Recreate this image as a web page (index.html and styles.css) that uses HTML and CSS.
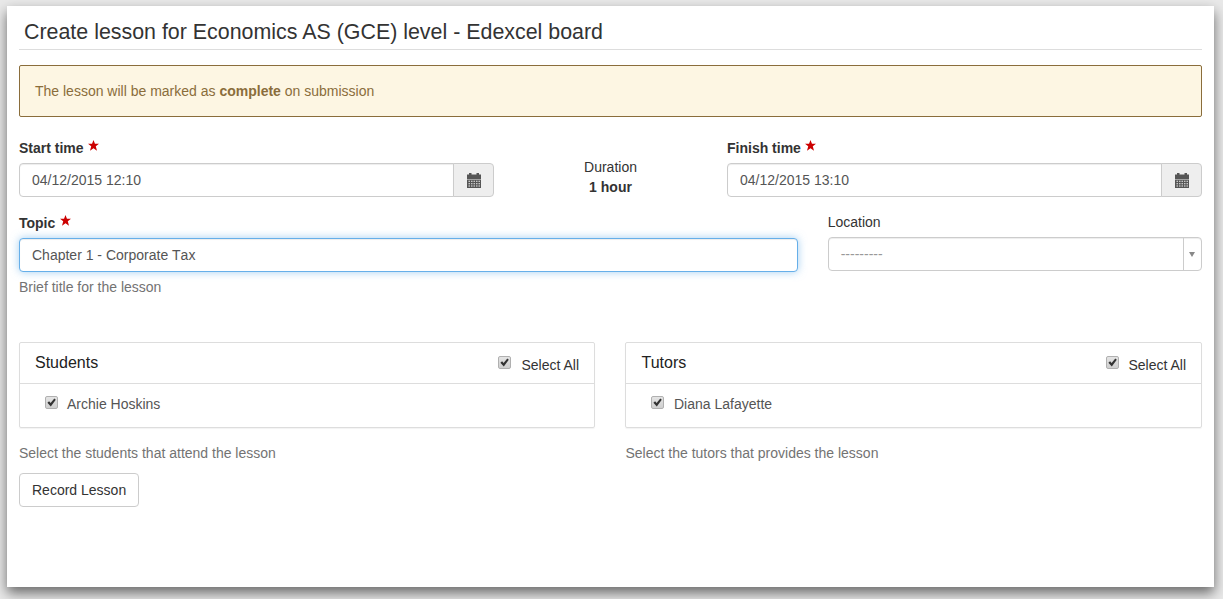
FILE: index.html
```html
<!DOCTYPE html>
<html lang="en">
<head>
<meta charset="utf-8">
<title>Create lesson</title>
<link rel="stylesheet" href="styles.css">
</head>
<body>
<svg class="defs" width="0" height="0" aria-hidden="true">
  <symbol id="star" viewBox="0 0 12 12"><polygon points="6,0 7.6,4.2 12,4.2 8.5,6.9 9.8,11.600 6,8.900 2.200,11.600 3.500,6.900 0,4.200 4.400,4.200"/></symbol>
  <symbol id="cal" viewBox="0 0 14 15"><path d="M0 1.500h2V0h2.500v1.500h5V0H12v1.500h2V6H0z"/><path fill-rule="evenodd" d="M0 6.500h14V15H0zM1.500 7.800v1h1.500v-1zm2.500 0v1h1.500v-1zm2.500 0v1H8v-1zm2.500 0v1h1.500v-1zm2.500 0v1H13v-1zM1.500 10.200v1h1.500v-1zm2.500 0v1h1.500v-1zm2.500 0v1H8v-1zm2.500 0v1h1.500v-1zm2.500 0v1H13v-1zM1.500 12.600v1h1.500v-1zm2.500 0v1h1.500v-1zm2.500 0v1H8v-1zm2.500 0v1h1.500v-1zm2.500 0v1H13v-1z"/></symbol>
  <symbol id="tick" viewBox="0 0 11 11"><path d="M1.400 5.800l1.700-1.500 1.500 1.700L8.300 1.400l1.500 1.300-5 6.800z"/></symbol>
</svg>
<main class="card">
  <h1 class="title">Create lesson for Economics AS (GCE) level - Edexcel board</h1>
  <div class="alert">The lesson will be marked as <strong>complete</strong> on submission</div>
  <form>
    <div class="row times">
      <div class="col col-5">
        <label class="label">Start time <svg class="star"><use href="#star"/></svg></label>
        <div class="input-group">
          <input class="control" type="text" value="04/12/2015 12:10">
          <span class="addon"><svg class="cal"><use href="#cal"/></svg></span>
        </div>
      </div>
      <div class="col col-2 duration">
        <div>Duration</div>
        <strong>1 hour</strong>
      </div>
      <div class="col col-5">
        <label class="label">Finish time <svg class="star"><use href="#star"/></svg></label>
        <div class="input-group">
          <input class="control" type="text" value="04/12/2015 13:10">
          <span class="addon"><svg class="cal"><use href="#cal"/></svg></span>
        </div>
      </div>
    </div>
    <div class="row topic-row">
      <div class="col col-8">
        <label class="label">Topic <svg class="star"><use href="#star"/></svg></label>
        <input class="control focus" type="text" value="Chapter 1 - Corporate Tax">
        <p class="help">Brief title for the lesson</p>
      </div>
      <div class="col col-4">
        <div class="label plain">Location</div>
        <div class="select">
          <span class="select-value">---------</span>
          <span class="select-arrow"></span>
        </div>
      </div>
    </div>
    <div class="row panels">
      <div class="col col-6">
        <section class="panel panel-left">
          <header class="panel-head">
            <span class="panel-title">Students</span>
            <span class="select-all"><span class="check"><svg><use href="#tick"/></svg></span>Select All</span>
          </header>
          <div class="panel-body"><span class="check"><svg><use href="#tick"/></svg></span>Archie Hoskins</div>
        </section>
        <p class="help">Select the students that attend the lesson</p>
      </div>
      <div class="col col-6">
        <section class="panel panel-right">
          <header class="panel-head">
            <span class="panel-title">Tutors</span>
            <span class="select-all"><span class="check"><svg><use href="#tick"/></svg></span>Select All</span>
          </header>
          <div class="panel-body"><span class="check"><svg><use href="#tick"/></svg></span>Diana Lafayette</div>
        </section>
        <p class="help">Select the tutors that provides the lesson</p>
      </div>
    </div>
    <button class="btn" type="button">Record Lesson</button>
  </form>
</main>
</body>
</html>
```
FILE: styles.css
```css
* { box-sizing: border-box; }
html, body { height: 100%; }
body {
  margin: 0;
  padding: 6px 9px 12px 7px;
  background: #e9e9e9;
  font: 14px/20px "Liberation Sans", Arial, sans-serif;
  color: #333;
  overflow: hidden;
}
.defs { position: absolute; }
.card {
  height: 581px;
  background: #fff;
  padding: 0 12px;
  box-shadow: 0 6px 12px rgba(0, 0, 0, .55);
}
.title {
  margin: 0 0 15px;
  height: 44px;
  padding: 14px 0 0 5px;
  font-size: 21.4px;
  line-height: 24px;
  font-weight: 400;
  color: #333;
  border-bottom: 1px solid #ddd;
}
.alert {
  height: 52px;
  padding: 15px;
  margin-bottom: 20px;
  border: 1px solid #8a6d3b;
  border-radius: 2px;
  background: #fdf6e3;
  color: #8a6d3b;
}
.row { display: flex; gap: 30px; }
.col { min-width: 0; }
.col-5 { flex: 0 0 475px; }
.col-2 { flex: 0 0 173px; }
.col-8 { flex: 0 0 778.67px; }
.col-4 { flex: 1 1 0; }
.col-6 { flex: 1 1 0; }
.times { height: 75px; }
.label { display: block; height: 26px; padding-top: 1px; font-weight: 700; }
.label.plain { font-weight: 400; height: 25px; padding-top: 0; }
.star { width: 11px; height: 11px; margin-left: .5px; vertical-align: 2px; fill: #c00; }
.input-group { display: flex; height: 34px; }
.control {
  display: block;
  width: 100%;
  height: 34px;
  padding: 6px 12px;
  border: 1px solid #ccc;
  border-radius: 4px;
  background: #fff;
  color: #555;
  font: inherit;
  font-kerning: none;
  box-shadow: inset 0 1px 1px rgba(0, 0, 0, .075);
  outline: none;
}
.input-group .control { flex: 1 1 auto; border-radius: 4px 0 0 4px; }
.focus {
  border-color: #66afe9;
  box-shadow: inset 0 1px 1px rgba(0, 0, 0, .075), 0 0 8px rgba(102, 175, 233, .6);
}
.addon {
  flex: 0 0 41px;
  display: flex;
  align-items: center;
  justify-content: center;
  margin-left: -1px;
  background: #eee;
  border: 1px solid #ccc;
  border-radius: 0 4px 4px 0;
}
.cal { width: 14px; height: 15px; fill: #555; }
.duration { padding-top: 20px; text-align: center; }
.topic-row { height: 130px; }
.help { margin: 5px 0 10px; color: #737373; }
.select {
  display: flex;
  height: 34px;
  border: 1px solid #ccc;
  border-radius: 4px;
  background: #fff;
  box-shadow: inset 0 1px 1px rgba(0, 0, 0, .075);
}
.select-value { flex: 1 1 auto; padding: 6px 12px; color: #999; }
.select-arrow { flex: 0 0 18px; position: relative; border-left: 1px solid #ccc; }
.select-arrow::after {
  content: "";
  position: absolute;
  left: 5px;
  top: 14px;
  border: 3.500px solid transparent;
  border-bottom: 0;
  border-top: 5px solid #888;
}
.panel {
  border: 1px solid #ddd;
  border-radius: 2px;
  height: 86px;
  margin-bottom: 15px;
  box-shadow: 0 1px 1px rgba(0, 0, 0, .05);
}
.panel-left { margin-right: .5px; }
.panel-right { margin-left: -.5px; }
.panel-right .panel-head { padding-left: 15.5px; }
.panel-right .panel-body { padding-left: 25px; }
.panel .check { margin-right: 10px; }
.panel-body .check { margin-right: 9px; }
.panel-right .select-all .check { margin-right: 9.5px; }
.panel-right .panel-body .check { margin-right: 10px; }
.panel-head {
  display: flex;
  justify-content: space-between;
  align-items: center;
  height: 41px;
  padding: 0 15px;
  border-bottom: 1px solid #ddd;
}
.panel-title { font-size: 16px; color: #222; }
.select-all { display: flex; align-items: center; padding-top: 4px; }
.select-all .check { margin-top: -6px; }
.panel-body { display: flex; align-items: center; height: 43px; padding: 0 0 3px 25px; color: #555; }
.panel-body .check { margin-top: -4px; }
.check {
  flex: none;
  display: inline-block;
  width: 13px;
  height: 13px;
  border: 1px solid #b0b0b0;
  border-radius: 2px;
  background: linear-gradient(#e4e4e4, #cfcfcf);
}
.check svg { display: block; width: 11px; height: 11px; fill: #333; }
.panels .help { margin: 0 0 10px; }
.btn {
  display: block;
  width: 120px;
  height: 34px;
  padding: 6px 12px;
  background: #fff;
  border: 1px solid #ccc;
  border-radius: 4px;
  color: #333;
  font: inherit;
  white-space: nowrap;
}
```
